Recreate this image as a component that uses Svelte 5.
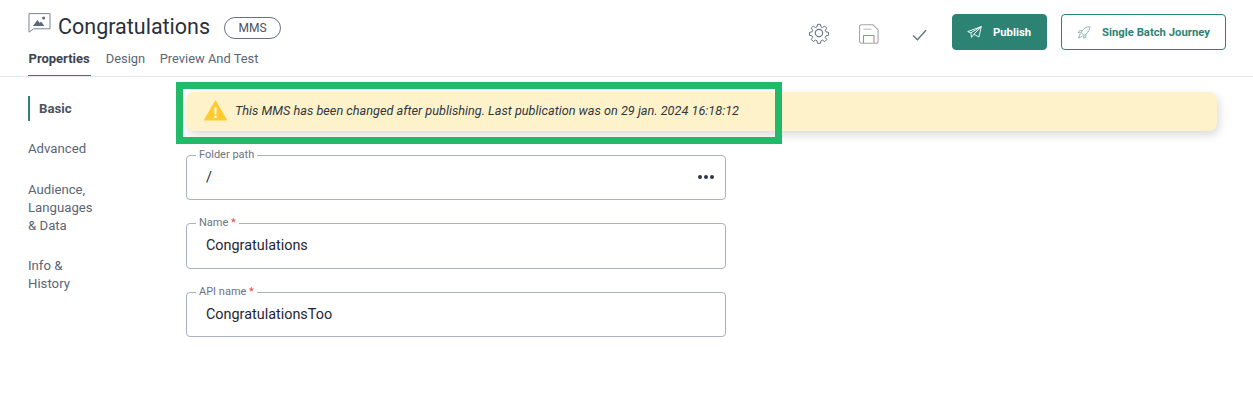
<script>
  const tabs = [
    { label: 'Properties', active: true },
    { label: 'Design', active: false },
    { label: 'Preview And Test', active: false }
  ];
  const sections = [
    { lines: ['Basic'], active: true },
    { lines: ['Advanced'], active: false },
    { lines: ['Audience,', 'Languages', '& Data'], active: false },
    { lines: ['Info &', 'History'], active: false }
  ];
  const fields = [
    { label: 'Folder path', value: '/', required: false, more: true },
    { label: 'Name', value: 'Congratulations', required: true, more: false },
    { label: 'API name', value: 'CongratulationsToo', required: true, more: false }
  ];
</script>

<div class="page">
  <header class="topbar">
    <div class="heading">
      <div class="title-row">
        <svg class="type-icon" width="23" height="20" viewBox="0 0 23 20" fill="none">
          <path d="M1 .6h21v15.200H5.600L1 19.200z" stroke="#7b8494" stroke-width="1" stroke-linejoin="round"></path>
          <path d="M5 13l4.400-6 2.400 3 1.200-1.400 3.400 4.400z" fill="#5d6778"></path>
          <circle cx="15.600" cy="5" r="1.500" fill="#5d6778"></circle>
        </svg>
        <h1>Congratulations</h1>
        <span class="badge">MMS</span>
      </div>
      <nav class="tabs">
        {#each tabs as tab}
          <span class="tab" class:active={tab.active}>{tab.label}</span>
        {/each}
      </nav>
    </div>

    <div class="actions">
      <svg class="gear" width="22" height="22" viewBox="0 0 24 24" fill="none" stroke="#667085" stroke-width="1.2" stroke-linejoin="round">
        <circle cx="12" cy="12" r="4"></circle>
        <path d="M10.200 1.500h3.600l.6 3.100 1.900.8 2.600-1.800 2.500 2.500-1.800 2.600.8 1.900 3.100.6v3.600l-3.100.6-.8 1.900 1.800 2.600-2.500 2.500-2.600-1.800-1.900.8-.6 3.100h-3.600l-.6-3.100-1.900-.8-2.600 1.800-2.500-2.500 1.800-2.600-.8-1.900-3.100-.6v-3.600l3.100-.6.8-1.900-1.800-2.600 2.500-2.500 2.600 1.800 1.900-.8z" transform="translate(1.2 1.2) scale(.9)"></path>
      </svg>
      <svg class="save" width="20" height="20" viewBox="0 0 20 20" fill="none" stroke-width="1.1" stroke-linejoin="round">
        <path d="M2.500.8h11.600l5 5v11.400a2 2 0 0 1-2 2H2.500a2 2 0 0 1-2-2V2.800a2 2 0 0 1 2-2z" stroke="#a9a3ad"></path>
        <path d="M4.500 19v-7.500h10.500V19" stroke="#b58a80"></path>
        <path d="M4.500 5.200h8" stroke="#b8bec9"></path>
      </svg>
      <svg class="check" width="15" height="12" viewBox="0 0 15 12" fill="none" stroke="#667085" stroke-width="1.4">
        <path d="M1 6.400l4.400 4.400L14 1.200"></path>
      </svg>
      <button class="btn primary">
        <svg width="15" height="12" viewBox="0 0 15 12" fill="none" stroke="#fff" stroke-width=".9" stroke-linejoin="round">
          <path d="M.7 5.600L14.300.6l-2.400 10.400-5-2.800-2.400 3.200-.6-4.600z"></path>
          <path d="M14.300.6L3.900 6.800M14.300.6L6.900 8.200"></path>
        </svg>
        <span>Publish</span>
      </button>
      <button class="btn outline">
        <svg width="14" height="13" viewBox="0 0 14 14" fill="none" stroke="#7aaca2" stroke-width=".9" stroke-linejoin="round">
          <path d="M13.300.7c-3.600.1-6 1.400-8 4.200L3.800 7l3.200 3.200 2.100-1.500c2.800-2 4.100-4.400 4.200-8z"></path>
          <path d="M5 5H2L.7 7.300h3M9 9v3l-2.300 1.300v-3M3 8.500L1 13l4.500-2"></path>
        </svg>
        <span>Single Batch Journey</span>
      </button>
    </div>
  </header>

  <div class="body">
    <aside class="sections">
      {#each sections as section}
        <div class="section" class:active={section.active}>
          {#each section.lines as line}
            <div>{line}</div>
          {/each}
        </div>
      {/each}
    </aside>

    <main class="content">
      <div class="alert">
        <svg width="23" height="21" viewBox="0 0 23 21">
          <path d="M11.500 1L22.400 20H.6z" fill="#ffcb2f" stroke="#ffcb2f" stroke-width="1.200" stroke-linejoin="round"></path>
          <path d="M10.400 7.500h2.200l-.3 7h-1.600zM10.400 15.800h2.200V18h-2.200z" fill="#fff"></path>
        </svg>
        <span>This MMS has been changed after publishing. Last publication was on 29 jan. 2024 16:18:12</span>
      </div>

      <form class="form">
        {#each fields as field}
          <div class="field">
            <span class="label">{field.label}{#if field.required}<em>&nbsp;*</em>{/if}</span>
            <span class="value">{field.value}</span>
            {#if field.more}
              <span class="more"><i></i><i></i><i></i></span>
            {/if}
          </div>
        {/each}
      </form>
    </main>
  </div>

  <div class="highlight"></div>
</div>

<style>
  :global(body) {
    background: #fff;
  }

  .page {
    position: relative;
    width: 1253px;
    height: 403px;
    overflow: hidden;
    font-family: Roboto, 'Noto Sans', sans-serif;
    color: #2f3744;
  }

  .topbar {
    height: 77px;
    box-sizing: border-box;
    border-bottom: 1px solid #e4e6ea;
    padding: 0 27px 0 28px;
    display: flex;
    justify-content: space-between;
  }

  .title-row {
    display: flex;
    align-items: center;
    height: 36px;
    margin-top: 8px;
  }

  .type-icon {
    margin-top: -7px;
    margin-right: 7px;
  }

  h1 {
    margin: 0;
    font-size: 21.5px;
    font-weight: 400;
    color: #29303c;
  }

  .badge {
    margin: 4px 0 0 14px;
    width: 57px;
    height: 22px;
    box-sizing: border-box;
    border: 1px solid #667085;
    border-radius: 11px;
    display: flex;
    align-items: center;
    justify-content: center;
    font-size: 12px;
    color: #475163;
  }

  .tabs {
    display: flex;
    gap: 14.5px;
  }

  .tab {
    height: 32px;
    box-sizing: border-box;
    padding-top: 7px;
    font-size: 12.9px;
    line-height: 15px;
    color: #5c6575;
  }

  .tab.active {
    font-size: 13px;
    font-weight: 700;
    color: #3c4452;
    border-bottom: 1px solid #2c8374;
    padding-left: 0.5px;
    padding-right: 1.5px;
  }

  .actions {
    display: flex;
    align-items: flex-start;
    padding-top: 14px;
  }

  .gear {
    margin: 8px 0 0 1px;
  }

  .save {
    margin: 10px 0 0 29px;
  }

  .check {
    margin: 15px 0 0 33px;
  }

  .btn {
    height: 36px;
    box-sizing: border-box;
    border-radius: 4px;
    display: flex;
    align-items: center;
    font-family: inherit;
    font-size: 11.3px;
    font-weight: 700;
    padding: 0;
  }

  .btn span {
    padding-top: 1px;
  }

  .btn.primary {
    width: 95px;
    margin-left: 25px;
    background: #2c8374;
    border: 1px solid #2c8374;
    color: #fff;
    gap: 11px;
    padding-left: 14px;
  }

  .btn.outline {
    width: 165px;
    margin-left: 14px;
    background: #fff;
    border: 1px solid #2c8374;
    color: #2c8374;
    gap: 11px;
    padding-left: 15px;
  }

  .body {
    display: flex;
  }

  .sections {
    width: 186px;
    padding: 19px 0 0 28px;
    box-sizing: border-box;
    flex-shrink: 0;
    font-size: 13.2px;
    line-height: 18px;
    color: #5c6575;
    display: flex;
    flex-direction: column;
    gap: 15px;
  }

  .section {
    padding: 3.5px 0;
  }

  .section:nth-child(3) {
    margin-top: 1px;
  }

  .section.active {
    font-weight: 700;
    color: #4a5260;
    border-left: 2px solid #2c8374;
    padding-left: 9px;
  }

  .content {
    width: 1031px;
    padding-top: 15px;
  }

  .alert {
    height: 39px;
    background: #fef2cb;
    border-radius: 8px;
    box-shadow: 2px 4px 10px rgba(0, 0, 0, 0.15);
    display: flex;
    align-items: center;
    padding-left: 18px;
    gap: 8px;
    font-size: 12.7px;
    font-style: italic;
    color: #2f3744;
  }

  .alert svg {
    margin-bottom: 2px;
  }

  .alert span {
    margin-bottom: 3px;
  }

  .form {
    width: 540px;
    margin-top: 24px;
    display: flex;
    flex-direction: column;
    gap: 23px;
  }

  .field {
    position: relative;
    height: 45.4px;
    box-sizing: border-box;
    border: 1px solid #aab1be;
    border-radius: 4px;
    padding: 11px 0 0 19px;
  }

  .label {
    position: absolute;
    left: 9px;
    top: -8px;
    padding: 0 3px;
    background: #fff;
    font-size: 11px;
    line-height: 13px;
    color: #6b7485;
  }

  .label em {
    font-style: normal;
    color: #e5484d;
  }

  .value {
    font-size: 14.4px;
    color: #1f2733;
  }

  .more {
    position: absolute;
    right: 11px;
    top: 19px;
    display: flex;
    gap: 2px;
  }

  .more i {
    width: 4px;
    height: 4px;
    border-radius: 50%;
    background: #2f3744;
  }

  /* annotation box drawn on top of the screenshot */
  .highlight {
    position: absolute;
    left: 176px;
    top: 82px;
    width: 606px;
    height: 62px;
    box-sizing: border-box;
    border: 7px solid #20ba68;
    pointer-events: none;
  }
</style>
